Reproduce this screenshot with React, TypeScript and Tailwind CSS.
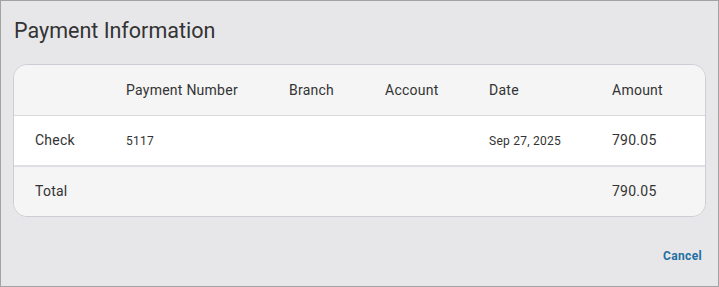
import React from "react";

const cols = "grid grid-cols-[91px_163px_96px_104px_123px_1fr] items-center pl-[21px] tracking-[0.25px]";

export default function App() {
  return (
    <div
      className="w-[719px] h-[287px] border border-[#a3a3a3] bg-[#e7e7e9] text-[#333333] flex flex-col"
      style={{ fontFamily: "Roboto, 'Liberation Sans', sans-serif" }}
    >
      <h1 className="pl-[13px] pt-[17px] text-[21.5px] leading-[26px] font-normal text-[#333333]">
        Payment Information
      </h1>
      <div className="mx-[12px] mt-[20px] rounded-[14px] border border-[#cbcfd5] overflow-hidden">
        <div className={`${cols} h-[51px] bg-[#f5f5f5] border-b border-[#d9dadd] text-[14px]`}>
          <div></div>
          <div>Payment Number</div>
          <div>Branch</div>
          <div>Account</div>
          <div>Date</div>
          <div>Amount</div>
        </div>
        <div className={`${cols} h-[51px] bg-white border-b-2 border-[#dedfe2] text-[14px]`}>
          <div>Check</div>
          <div className="text-[12px]">5117</div>
          <div></div>
          <div></div>
          <div className="text-[12px]">Sep 27, 2025</div>
          <div>790.05</div>
        </div>
        <div className={`${cols} h-[49px] bg-[#f5f5f5] text-[14px]`}>
          <div>Total</div>
          <div></div>
          <div></div>
          <div></div>
          <div></div>
          <div>790.05</div>
        </div>
      </div>
      <div className="flex justify-end pr-[16px] mt-[32px]">
        <button className="text-[12px] font-bold tracking-[0.35px] text-[#1f6fa3] leading-[14px]">Cancel</button>
      </div>
    </div>
  );
}
